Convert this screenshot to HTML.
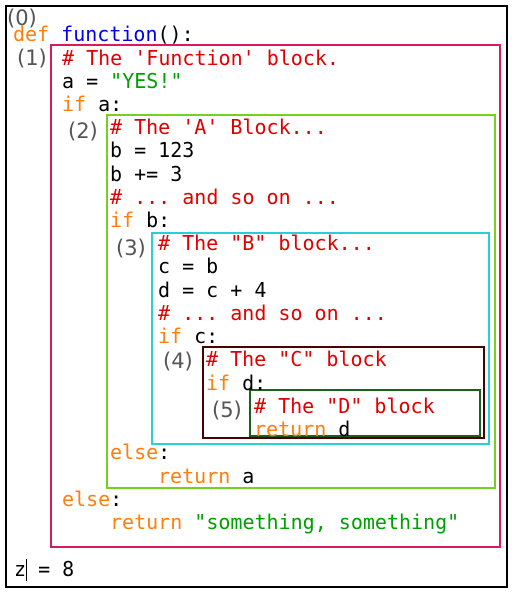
<!DOCTYPE html>
<html><head><meta charset="utf-8"><style>
html,body{margin:0;padding:0;background:#fff;width:517px;height:597px;overflow:hidden;position:relative}
.l{position:absolute;font-family:"DejaVu Sans Mono","Liberation Mono",monospace;font-size:20px;line-height:24px;white-space:pre;color:#000}
.lb{position:absolute;font-family:"DejaVu Sans","Liberation Sans",sans-serif;font-size:21px;line-height:24px;color:#555;white-space:pre}
.b{position:absolute;box-sizing:border-box;border:2px solid}
.k{color:#ff7f0e}.f{color:#0000ee}.c{color:#e00000}.s{color:#00a000}
</style></head><body>
<div class="b" style="left:5px;top:5px;width:503px;height:583px;border-color:#000"></div>
<div class="b" style="left:50px;top:44px;width:451px;height:504px;border-color:#d81b60"></div>
<div class="b" style="left:106px;top:114px;width:390px;height:375px;border-color:#76d11c"></div>
<div class="b" style="left:151px;top:232px;width:339px;height:213px;border-color:#26d0d6"></div>
<div class="b" style="left:202px;top:346px;width:283px;height:93px;border-color:#4a0000"></div>
<div class="b" style="left:249px;top:389px;width:232px;height:48px;border-color:#1b5e20"></div>

<div class="lb" style="left:7px;top:6px">(0)</div>
<div class="lb" style="left:17px;top:46px">(1)</div>
<div class="lb" style="left:68px;top:119px">(2)</div>
<div class="lb" style="left:116px;top:236px">(3)</div>
<div class="lb" style="left:163px;top:349px">(4)</div>
<div class="lb" style="left:212px;top:398px">(5)</div>

<div class="l" style="left:13px;top:22px"><span class="k">def</span> <span class="f">function</span>():</div>
<div class="l" style="left:62px;top:46px"><span class="c"># The 'Function' block.</span></div>
<div class="l" style="left:62px;top:69px">a = <span class="s">"YES!"</span></div>
<div class="l" style="left:62px;top:92px"><span class="k">if</span> a:</div>
<div class="l" style="left:110px;top:115px"><span class="c"># The 'A' Block...</span></div>
<div class="l" style="left:110px;top:138px">b = 123</div>
<div class="l" style="left:110px;top:162px">b += 3</div>
<div class="l" style="left:110px;top:185px"><span class="c"># ... and so on ...</span></div>
<div class="l" style="left:110px;top:208px"><span class="k">if</span> b:</div>
<div class="l" style="left:158px;top:231px"><span class="c"># The "B" block...</span></div>
<div class="l" style="left:158px;top:254px">c = b</div>
<div class="l" style="left:158px;top:278px">d = c + 4</div>
<div class="l" style="left:158px;top:301px"><span class="c"># ... and so on ...</span></div>
<div class="l" style="left:158px;top:324px"><span class="k">if</span> c:</div>
<div class="l" style="left:206px;top:347px"><span class="c"># The "C" block</span></div>
<div class="l" style="left:206px;top:371px"><span class="k">if</span> d:</div>
<div class="l" style="left:254px;top:394px"><span class="c"># The "D" block</span></div>
<div class="l" style="left:254px;top:417px"><span class="k">return</span> d</div>
<div class="l" style="left:110px;top:440px"><span class="k">else</span>:</div>
<div class="l" style="left:158px;top:464px"><span class="k">return</span> a</div>
<div class="l" style="left:62px;top:487px"><span class="k">else</span>:</div>
<div class="l" style="left:110px;top:510px"><span class="k">return</span> <span class="s">"something, something"</span></div>
<div class="l" style="left:14px;top:557px">z = 8</div>
<div style="position:absolute;left:26px;top:559px;width:1px;height:22px;background:#000"></div>
</body></html>
